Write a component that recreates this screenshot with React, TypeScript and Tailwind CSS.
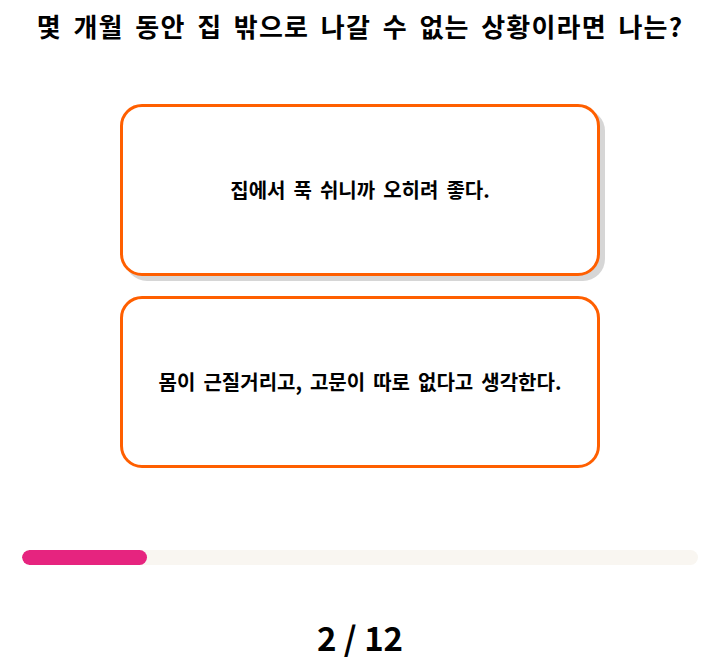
const options = [
  "집에서 푹 쉬니까 오히려 좋다.",
  "몸이 근질거리고, 고문이 따로 없다고 생각한다.",
];

export default function App() {
  const current = 2;
  const total = 12;

  return (
    <div
      className="w-[720px] bg-white px-[22px] pt-[10px] text-black"
      style={{ fontFamily: '"Noto Sans CJK KR", "Noto Sans", sans-serif' }}
    >
      <h1 className="text-center text-[26px] font-bold leading-[32px] tracking-[1.2px] [word-spacing:4.5px]">
        몇 개월 동안 집 밖으로 나갈 수 없는 상황이라면 나는?
      </h1>

      <div className="mt-[62px] flex flex-col items-center gap-[20px]">
        {options.map((text, i) => (
          <button
            key={i}
            className={`flex h-[172px] w-[480px] items-center justify-center rounded-[22px] border-[3px] border-[#ff5f00] bg-white text-[20px] font-bold [word-spacing:3.5px] ${
              i === 0 ? "shadow-[5px_5px_0_0_#d6d6d6]" : ""
            }`}
          >
            {text}
          </button>
        ))}
      </div>

      <div className="mt-[82px] h-[15px] w-full overflow-hidden rounded-full bg-[#f9f6f1]">
        <div className="h-full w-[125px] rounded-full bg-[#e6247f]" />
      </div>

      <div className="mt-[52px] text-center text-[33px] font-bold leading-[40px]">
        {current} / {total}
      </div>
    </div>
  );
}
